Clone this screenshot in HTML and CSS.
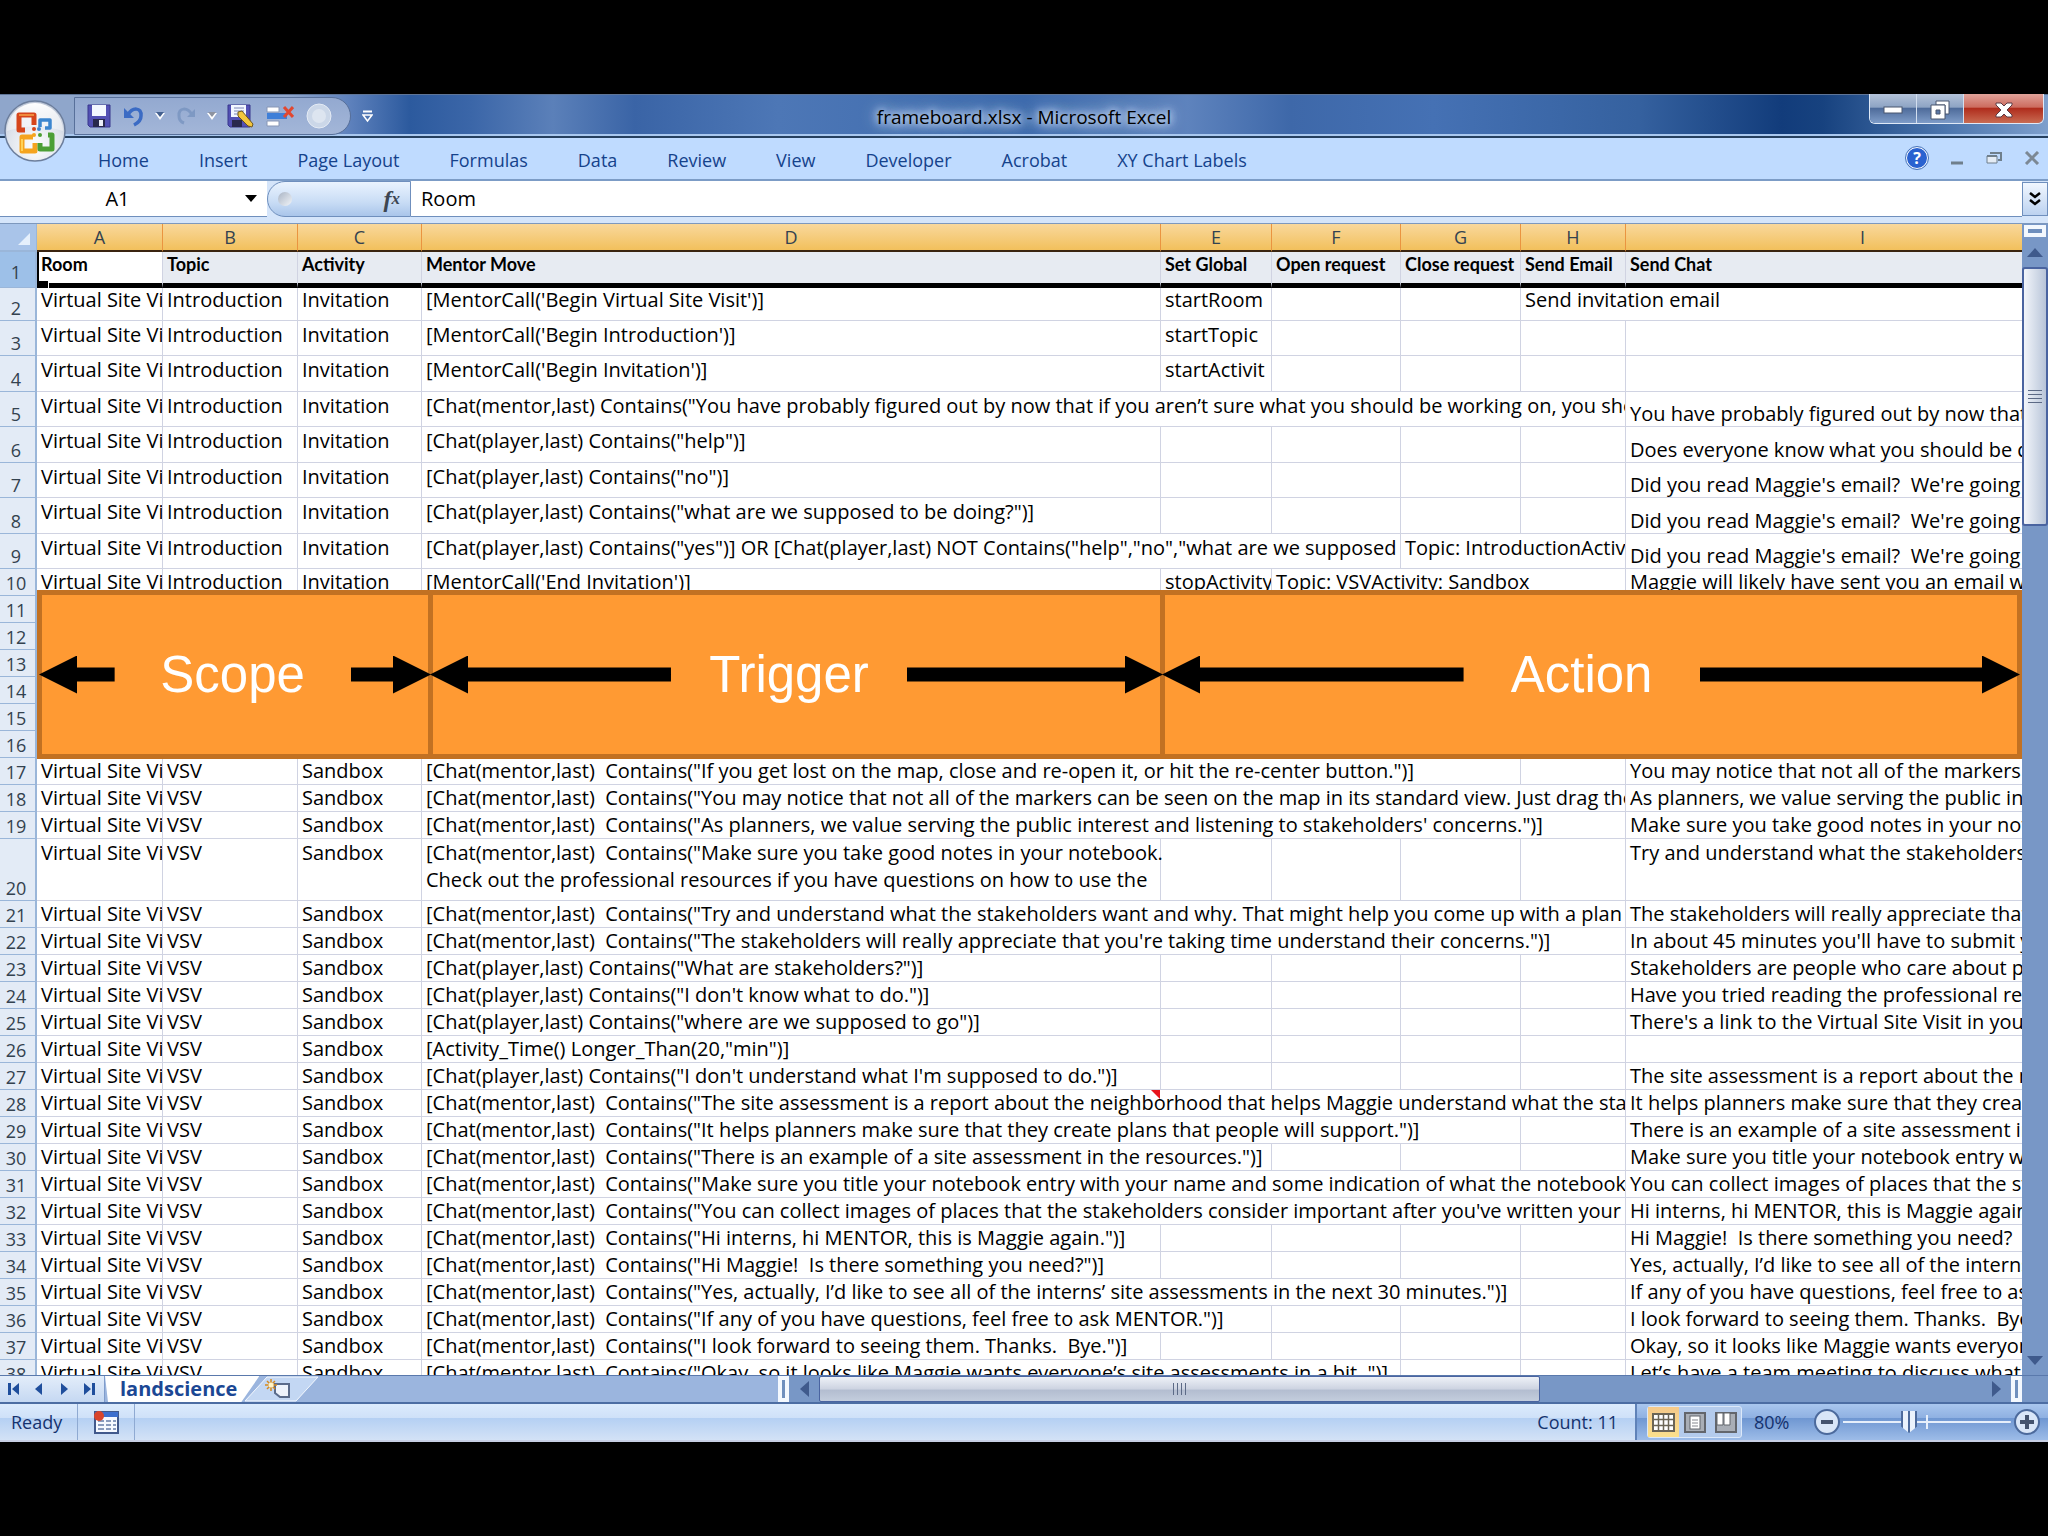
FILE: index.html
```html
<!DOCTYPE html>
<html lang="en">
<head>
  <meta charset="UTF-8" />
  <meta name="viewport" content="width=device-width, initial-scale=1.0"/>
  <title>frameboard.xlsx - Microsoft Excel</title>
  <link rel="stylesheet" href="styles.css">
</head>
<body>

<div class="window">

  <header class="titlebar">
    <div class="quick-access">
      <button class="office" aria-label="Office Button">
        <svg width="62" height="62" viewBox="0 0 62 62">
          <defs>
            <radialGradient id="orb" cx="50%" cy="75%" r="75%">
              <stop offset="0" stop-color="#ffffff"/>
              <stop offset="0.6" stop-color="#dfe4ec"/>
              <stop offset="1" stop-color="#b9c3d4"/>
            </radialGradient>
            <linearGradient id="orbTop" x1="0" y1="0" x2="0" y2="1">
              <stop offset="0" stop-color="#fff"/>
              <stop offset="1" stop-color="#fff" stop-opacity="0.35"/>
            </linearGradient>
          </defs>
          <circle cx="31" cy="31" r="30" fill="url(#orb)" stroke="#6c7e9c" stroke-width="1.5"/>
          <path d="M3 31A28 28 0 0 1 59 31Q31 22 3 31Z" fill="url(#orbTop)"/>
          <g fill="none" stroke-width="5" stroke-linejoin="round">
            <path d="M21 30H15V15H30V25" stroke="#d6451b"/>
            <path d="M36 27V20H46V28H41" stroke="#3c86cf" stroke-width="3.5"/>
            <path d="M29 37H18V51H31V43" stroke="#f5a41f"/>
            <path d="M44 35H48V49H36V43" stroke="#4c9f35"/>
          </g>
          <path d="M15 15H30" stroke="#f08a3c" stroke-width="2"/>
          <path d="M18 39V51" stroke="#ffd257" stroke-width="2"/>
          <circle cx="30" cy="29" r="2" fill="#d6451b"/>
          <circle cx="35" cy="29" r="2" fill="#3c86cf"/>
          <circle cx="30" cy="35" r="2" fill="#f5a41f"/>
          <circle cx="36" cy="35" r="2" fill="#4c9f35"/>
        </svg>
      </button>
      <div class="pill">
        <button aria-label="Save">
          <svg width="24" height="24" viewBox="0 0 24 24">
            <path d="M1 1H23V23H3L1 21Z" fill="#5250b4" stroke="#38368c"/>
            <rect x="5" y="1" width="14" height="11" fill="#f3f7ff"/>
            <rect x="6" y="15" width="12" height="8" fill="#28284c"/>
            <rect x="12" y="16" width="4" height="6" fill="#eceef8"/>
          </svg>
        </button>
        <button class="undo" aria-label="Undo">
          <svg width="22" height="22" viewBox="0 0 22 22">
            <path d="M5 10C9 2 19 2 18 11C18 15 15 18 11 20" fill="none" stroke="#3b6bc4" stroke-width="3.5"/>
            <path d="M1 3V13H11Z" fill="#3b6bc4"/>
          </svg>
        </button>
        <button class="caret" aria-label="Undo list">
          <svg width="10" height="8" viewBox="0 0 10 8"><path d="M0 1H10L5 8Z" fill="#fff"/><path d="M1 0H9L5 5Z" fill="#43608f"/></svg>
        </button>
        <button class="redo" aria-label="Redo">
          <svg width="22" height="22" viewBox="0 0 22 22">
            <path d="M17 10C13 2 3 2 4 11C4 15 6 17 9 18" fill="none" stroke="#7390bd" stroke-width="3"/>
            <path d="M20 4V12H12Z" fill="#7390bd"/>
          </svg>
        </button>
        <button class="caret" aria-label="Redo list">
          <svg width="10" height="8" viewBox="0 0 10 8"><path d="M0 1H10L5 8Z" fill="#fff"/><path d="M1 0H9L5 5Z" fill="#8d93a0"/></svg>
        </button>
        <button aria-label="Save As">
          <svg width="27" height="24" viewBox="0 0 27 24">
            <path d="M1 1H23V23H3L1 21Z" fill="#5250b4" stroke="#38368c"/>
            <rect x="4" y="1" width="15" height="12" fill="#f3f7ff"/>
            <path d="M7 4H17M7 7H17M7 10H13" stroke="#7c86b8"/>
            <rect x="5" y="16" width="10" height="7" fill="#28284c"/>
            <path d="M11 8L15 7L26 20L25 23L21 22L11 12Z" fill="#f2c63e" stroke="#6e561c"/>
          </svg>
        </button>
        <button aria-label="Delete Sheet Rows">
          <svg width="28" height="24" viewBox="0 0 28 24">
            <path d="M1 3H13V8H1ZM1 17H13V22H1Z" fill="#fff" stroke="#8796b5"/>
            <rect x="1" y="9" width="20" height="6" fill="#3f7fd8"/>
            <path d="M18 3L27 13M27 3L18 13" stroke="#e2472f" stroke-width="3"/>
          </svg>
        </button>
        <button aria-label="Record">
          <svg width="26" height="26" viewBox="0 0 26 26">
            <circle cx="13" cy="13" r="12" fill="#cbd7e8" stroke="#e4ebf5"/>
            <circle cx="13" cy="13" r="7" fill="#dde5f0"/>
          </svg>
        </button>
      </div>
      <button class="customize" aria-label="Customize Quick Access Toolbar">
        <svg width="11" height="13" viewBox="0 0 11 13"><path d="M1 1.500H10" stroke="#fff" stroke-width="2"/><path d="M1 5H10L5.500 11Z" fill="none" stroke="#fff" stroke-width="1.500"/></svg>
      </button>
    </div>
    <h1>frameboard.xlsx - Microsoft Excel</h1>
    <div class="window-buttons">
      <button aria-label="Minimize">
        <svg width="20" height="10" viewBox="0 0 20 10"><rect x="1" y="2" width="18" height="6" fill="#fff" stroke="#4a566e"/></svg>
      </button>
      <button aria-label="Restore">
        <svg width="20" height="20" viewBox="0 0 20 20">
          <path d="M6 1H19V14H15V5H6Z" fill="#fff" stroke="#4a566e"/>
          <path d="M1 5H15V19H1ZM6 10V14H10V10Z" fill="#fff" fill-rule="evenodd" stroke="#4a566e"/>
        </svg>
      </button>
      <button class="close" aria-label="Close">
        <svg width="18" height="16" viewBox="0 0 18 16"><path d="M1 1H6L9 4L12 1H17V3L12 8L17 13V15H12L9 12L6 15H1V13L6 8L1 3Z" fill="#fff" stroke="#5a3a44"/></svg>
      </button>
    </div>
  </header>

  <nav class="ribbon">
    <a href="#">Home</a>
    <a href="#">Insert</a>
    <a href="#">Page Layout</a>
    <a href="#">Formulas</a>
    <a href="#">Data</a>
    <a href="#">Review</a>
    <a href="#">View</a>
    <a href="#">Developer</a>
    <a href="#">Acrobat</a>
    <a href="#">XY Chart Labels</a>
    <div class="doc-buttons">
      <button class="help" aria-label="Help">?</button>
      <button aria-label="Minimize workbook">
        <svg width="14" height="16" viewBox="0 0 14 16"><path d="M1 13H13" stroke="#6f7f8c" stroke-width="3"/></svg>
      </button>
      <button aria-label="Restore workbook">
        <svg width="16" height="14" viewBox="0 0 16 14"><path d="M4 2H15V9H12" fill="none" stroke="#6f7f8c" stroke-width="2"/><path d="M1 5H11V12H1Z" fill="#e4ecf5" stroke="#6f7f8c"/><path d="M1 5H11" stroke="#6f7f8c" stroke-width="2"/></svg>
      </button>
      <button aria-label="Close workbook">
        <svg width="16" height="14" viewBox="0 0 16 14"><path d="M2 1L14 13M14 1L2 13" stroke="#7c8894" stroke-width="3"/></svg>
      </button>
    </div>
  </nav>

  <div class="formula-bar">
    <input class="name-box" aria-label="Name Box" value="A1">
    <button class="name-caret" aria-label="Open name list">
      <svg width="12" height="8" viewBox="0 0 12 8"><path d="M0 0H12L6 7Z" fill="#000"/></svg>
    </button>
    <div class="fx">
      <span class="dot"></span>
      <button aria-label="Insert Function"><i>f</i><sub>x</sub></button>
    </div>
    <input class="formula" aria-label="Formula" value="Room">
    <button class="expand" aria-label="Expand formula bar">
      <svg width="12" height="14" viewBox="0 0 12 14"><path d="M1 1L6 5L11 1M1 8L6 12L11 8" fill="none" stroke="#000" stroke-width="2.500"/></svg>
    </button>
  </div>

  <main class="workspace">
    <div class="sheet">
      <table>
        <colgroup>
          <col class="col-num"><col class="col-a"><col class="col-b"><col class="col-c"><col class="col-d">
          <col class="col-e"><col class="col-f"><col class="col-g"><col class="col-h"><col class="col-i">
        </colgroup>
        <thead>
          <tr><th class="corner" aria-label="Select all"><svg width="12" height="12" viewBox="0 0 12 12"><path d="M12 0V12H0Z" fill="#e6f0fc"/></svg></th><th>A</th><th>B</th><th>C</th><th>D</th><th>E</th><th>F</th><th>G</th><th>H</th><th>I</th></tr>
        </thead>
        <tbody>
          <tr class="head"><th>1</th><td class="active">Room<span class="handle"></span></td><td>Topic</td><td>Activity</td><td>Mentor Move</td><td>Set Global</td><td>Open request</td><td>Close request</td><td>Send Email</td><td>Send Chat</td></tr>
          <tr class="first"><th>2</th><td>Virtual Site Visit</td><td>Introduction</td><td>Invitation</td><td>[MentorCall('Begin Virtual Site Visit')]</td><td>startRoom</td><td></td><td></td><td colspan="2">Send invitation email</td></tr>
          <tr class="tall"><th>3</th><td>Virtual Site Visit</td><td>Introduction</td><td>Invitation</td><td>[MentorCall('Begin Introduction')]</td><td>startTopic</td><td></td><td></td><td></td><td></td></tr>
          <tr class="tall"><th>4</th><td>Virtual Site Visit</td><td>Introduction</td><td>Invitation</td><td>[MentorCall('Begin Invitation')]</td><td>startActivit</td><td></td><td></td><td></td><td></td></tr>
          <tr class="tall"><th>5</th><td>Virtual Site Visit</td><td>Introduction</td><td>Invitation</td><td colspan="5">[Chat(mentor,last) Contains("You have probably figured out by now that if you aren’t sure what you should be working on, you should</td><td class="low">You have probably figured out by now that</td></tr>
          <tr class="tall"><th>6</th><td>Virtual Site Visit</td><td>Introduction</td><td>Invitation</td><td>[Chat(player,last) Contains("help")]</td><td></td><td></td><td></td><td></td><td class="low">Does everyone know what you should be doing?</td></tr>
          <tr class="tall"><th>7</th><td>Virtual Site Visit</td><td>Introduction</td><td>Invitation</td><td>[Chat(player,last) Contains("no")]</td><td></td><td></td><td></td><td></td><td class="low">Did you read Maggie's email?  We're going</td></tr>
          <tr class="tall"><th>8</th><td>Virtual Site Visit</td><td>Introduction</td><td>Invitation</td><td>[Chat(player,last) Contains("what are we supposed to be doing?")]</td><td></td><td></td><td></td><td></td><td class="low">Did you read Maggie's email?  We're going</td></tr>
          <tr class="tall"><th>9</th><td>Virtual Site Visit</td><td>Introduction</td><td>Invitation</td><td colspan="3">[Chat(player,last) Contains("yes")] OR [Chat(player,last) NOT Contains("help","no","what are we supposed</td><td colspan="2">Topic: IntroductionActivity</td><td class="low">Did you read Maggie's email?  We're going</td></tr>
          <tr><th>10</th><td>Virtual Site Visit</td><td>Introduction</td><td>Invitation</td><td>[MentorCall('End Invitation')]</td><td>stopActivity</td><td colspan="3">Topic: VSVActivity: Sandbox</td><td>Maggie will likely have sent you an email with</td></tr>
          <tr><th>11</th><td colspan="9"></td></tr>
          <tr><th>12</th><td colspan="9"></td></tr>
          <tr><th>13</th><td colspan="9"></td></tr>
          <tr><th>14</th><td colspan="9"></td></tr>
          <tr><th>15</th><td colspan="9"></td></tr>
          <tr><th>16</th><td colspan="9"></td></tr>
          <tr><th>17</th><td>Virtual Site Visit</td><td>VSV</td><td>Sandbox</td><td colspan="4">[Chat(mentor,last)  Contains("If you get lost on the map, close and re-open it, or hit the re-center button.")]</td><td></td><td>You may notice that not all of the markers can</td></tr>
          <tr><th>18</th><td>Virtual Site Visit</td><td>VSV</td><td>Sandbox</td><td colspan="5">[Chat(mentor,last)  Contains("You may notice that not all of the markers can be seen on the map in its standard view. Just drag the</td><td>As planners, we value serving the public interest</td></tr>
          <tr><th>19</th><td>Virtual Site Visit</td><td>VSV</td><td>Sandbox</td><td colspan="5">[Chat(mentor,last)  Contains("As planners, we value serving the public interest and listening to stakeholders' concerns.")]</td><td>Make sure you take good notes in your notebook.</td></tr>
          <tr class="double"><th>20</th><td>Virtual Site Visit</td><td>VSV</td><td>Sandbox</td><td class="spill">[Chat(mentor,last)  Contains("Make sure you take good notes in your notebook.<br>Check out the professional resources if you have questions on how to use the</td><td></td><td></td><td></td><td></td><td>Try and understand what the stakeholders</td></tr>
          <tr><th>21</th><td>Virtual Site Visit</td><td>VSV</td><td>Sandbox</td><td colspan="5">[Chat(mentor,last)  Contains("Try and understand what the stakeholders want and why. That might help you come up with a plan that</td><td>The stakeholders will really appreciate that you're</td></tr>
          <tr><th>22</th><td>Virtual Site Visit</td><td>VSV</td><td>Sandbox</td><td colspan="5">[Chat(mentor,last)  Contains("The stakeholders will really appreciate that you're taking time understand their concerns.")]</td><td>In about 45 minutes you'll have to submit your</td></tr>
          <tr><th>23</th><td>Virtual Site Visit</td><td>VSV</td><td>Sandbox</td><td>[Chat(player,last) Contains("What are stakeholders?")]</td><td></td><td></td><td></td><td></td><td>Stakeholders are people who care about places</td></tr>
          <tr><th>24</th><td>Virtual Site Visit</td><td>VSV</td><td>Sandbox</td><td>[Chat(player,last) Contains("I don't know what to do.")]</td><td></td><td></td><td></td><td></td><td>Have you tried reading the professional resources</td></tr>
          <tr><th>25</th><td>Virtual Site Visit</td><td>VSV</td><td>Sandbox</td><td>[Chat(player,last) Contains("where are we supposed to go")]</td><td></td><td></td><td></td><td></td><td>There's a link to the Virtual Site Visit in your</td></tr>
          <tr><th>26</th><td>Virtual Site Visit</td><td>VSV</td><td>Sandbox</td><td>[Activity_Time() Longer_Than(20,"min")]</td><td></td><td></td><td></td><td></td><td></td></tr>
          <tr><th>27</th><td>Virtual Site Visit</td><td>VSV</td><td>Sandbox</td><td>[Chat(player,last) Contains("I don't understand what I'm supposed to do.")]</td><td></td><td></td><td></td><td></td><td>The site assessment is a report about the neighborhood</td></tr>
          <tr><th>28</th><td>Virtual Site Visit</td><td>VSV</td><td>Sandbox</td><td class="noted" colspan="5">[Chat(mentor,last)  Contains("The site assessment is a report about the neighborhood that helps Maggie understand what the stakeholders<span class="note"></span></td><td>It helps planners make sure that they create plans</td></tr>
          <tr><th>29</th><td>Virtual Site Visit</td><td>VSV</td><td>Sandbox</td><td colspan="4">[Chat(mentor,last)  Contains("It helps planners make sure that they create plans that people will support.")]</td><td></td><td>There is an example of a site assessment in the</td></tr>
          <tr><th>30</th><td>Virtual Site Visit</td><td>VSV</td><td>Sandbox</td><td colspan="2">[Chat(mentor,last)  Contains("There is an example of a site assessment in the resources.")]</td><td></td><td></td><td></td><td>Make sure you title your notebook entry with</td></tr>
          <tr><th>31</th><td>Virtual Site Visit</td><td>VSV</td><td>Sandbox</td><td colspan="5">[Chat(mentor,last)  Contains("Make sure you title your notebook entry with your name and some indication of what the notebook entry</td><td>You can collect images of places that the stakeholders</td></tr>
          <tr><th>32</th><td>Virtual Site Visit</td><td>VSV</td><td>Sandbox</td><td colspan="5">[Chat(mentor,last)  Contains("You can collect images of places that the stakeholders consider important after you've written your site</td><td>Hi interns, hi MENTOR, this is Maggie again.</td></tr>
          <tr><th>33</th><td>Virtual Site Visit</td><td>VSV</td><td>Sandbox</td><td>[Chat(mentor,last)  Contains("Hi interns, hi MENTOR, this is Maggie again.")]</td><td></td><td></td><td></td><td></td><td>Hi Maggie!  Is there something you need?</td></tr>
          <tr><th>34</th><td>Virtual Site Visit</td><td>VSV</td><td>Sandbox</td><td>[Chat(mentor,last)  Contains("Hi Maggie!  Is there something you need?")]</td><td></td><td></td><td></td><td></td><td>Yes, actually, I’d like to see all of the interns’</td></tr>
          <tr><th>35</th><td>Virtual Site Visit</td><td>VSV</td><td>Sandbox</td><td colspan="4">[Chat(mentor,last)  Contains("Yes, actually, I’d like to see all of the interns’ site assessments in the next 30 minutes.")]</td><td></td><td>If any of you have questions, feel free to ask</td></tr>
          <tr><th>36</th><td>Virtual Site Visit</td><td>VSV</td><td>Sandbox</td><td colspan="2">[Chat(mentor,last)  Contains("If any of you have questions, feel free to ask MENTOR.")]</td><td></td><td></td><td></td><td>I look forward to seeing them. Thanks.  Bye.</td></tr>
          <tr><th>37</th><td>Virtual Site Visit</td><td>VSV</td><td>Sandbox</td><td>[Chat(mentor,last)  Contains("I look forward to seeing them. Thanks.  Bye.")]</td><td></td><td></td><td></td><td></td><td>Okay, so it looks like Maggie wants everyone’s</td></tr>
          <tr><th>38</th><td>Virtual Site Visit</td><td>VSV</td><td>Sandbox</td><td colspan="3">[Chat(mentor,last)  Contains("Okay, so it looks like Maggie wants everyone’s site assessments in a bit. ")]</td><td></td><td></td><td>Let’s have a team meeting to discuss what</td></tr>
        </tbody>
      </table>

      <div class="bands">
        <div class="band scope"><span class="arrow left"></span><span class="label">Scope</span><span class="arrow right"></span></div>
        <div class="band trigger"><span class="arrow left"></span><span class="label">Trigger</span><span class="arrow right"></span></div>
        <div class="band action"><span class="arrow left"></span><span class="label">Action</span><span class="arrow right"></span></div>
      </div>
    </div>

    <div class="vscroll">
      <span class="split"></span>
      <button aria-label="Scroll up"><svg width="16" height="9" viewBox="0 0 16 9"><path d="M0 9L8 0L16 9Z" fill="#3f5a8c"/></svg></button>
      <div class="vtrack"><div class="vthumb"><span class="grip"></span></div></div>
      <button aria-label="Scroll down"><svg width="16" height="9" viewBox="0 0 16 9"><path d="M0 0H16L8 9Z" fill="#3f5a8c"/></svg></button>
    </div>
  </main>

  <div class="sheet-bar">
    <div class="tabs">
      <div class="tab-nav">
        <button aria-label="First sheet"><svg width="12" height="14" viewBox="0 0 12 14"><path d="M0 1H3V13H0ZM11 1V13L4 7Z" fill="#1f4e9c"/></svg></button>
        <button aria-label="Previous sheet"><svg width="12" height="14" viewBox="0 0 12 14"><path d="M9 1V13L2 7Z" fill="#1f4e9c"/></svg></button>
        <button aria-label="Next sheet"><svg width="12" height="14" viewBox="0 0 12 14"><path d="M3 1V13L10 7Z" fill="#1f4e9c"/></svg></button>
        <button aria-label="Last sheet"><svg width="12" height="14" viewBox="0 0 12 14"><path d="M9 1H12V13H9ZM1 1V13L8 7Z" fill="#1f4e9c"/></svg></button>
      </div>
      <button class="tab">landscience</button>
      <button class="new-tab" aria-label="Insert Worksheet">
        <svg width="74" height="26" viewBox="0 0 74 26">
          <path d="M0 25L22 1H73L51 25Z" fill="#c3d7f3" stroke="#f4f8fe"/>
          <path d="M30 8H44V21H35L30 17Z" fill="#eef3fb" stroke="#5a6b8a" stroke-width="2"/>
          <path d="M26 3V15M20 9H32M22 5L30 13M30 5L22 13" stroke="#d68a1e" stroke-width="1.500"/>
          <circle cx="26" cy="9" r="2.500" fill="#fff3c4"/>
        </svg>
      </button>
    </div>
    <div class="hscroll">
      <span class="bar-handle"></span>
      <button aria-label="Scroll left"><svg width="9" height="16" viewBox="0 0 9 16"><path d="M9 0V16L0 8Z" fill="#3f5a8c"/></svg></button>
      <div class="htrack"><div class="hthumb"><span class="grip"></span></div></div>
      <button aria-label="Scroll right"><svg width="9" height="16" viewBox="0 0 9 16"><path d="M0 0V16L9 8Z" fill="#3f5a8c"/></svg></button>
      <span class="bar-handle"></span>
    </div>
  </div>

  <footer class="status">
    <span class="ready">Ready</span>
    <button class="macro" aria-label="Record Macro">
      <svg width="26" height="24" viewBox="0 0 26 24">
        <rect x="2" y="2" width="23" height="21" fill="#f6f9ff" stroke="#41598c" stroke-width="2"/>
        <rect x="2" y="2" width="23" height="5" fill="#3c6fce"/>
        <path d="M5 11H11M13 11H18M20 11H23M5 15H11M13 15H18M20 15H23M5 19H11M13 19H18M20 19H23" stroke="#8a9cbe" stroke-width="2"/>
        <circle cx="6" cy="6" r="5" fill="#d8452c"/>
      </svg>
    </button>
    <span class="count">Count: 11</span>
    <div class="status-right">
      <div class="views">
        <button class="on" aria-label="Normal view">
          <svg width="23" height="19" viewBox="0 0 23 19"><rect x="1" y="1" width="21" height="17" fill="#fff" stroke="#6b6556" stroke-width="2"/><path d="M6.500 1V18M11.500 1V18M16.500 1V18M1 6.500H22M1 12.500H22" stroke="#6b6556" stroke-width="1.500"/></svg>
        </button>
        <button aria-label="Page layout view">
          <svg width="22" height="21" viewBox="0 0 22 21"><rect x="1" y="1" width="20" height="19" fill="#a9aeb6" stroke="#63666c" stroke-width="2"/><rect x="6" y="4" width="10" height="13" fill="#fff" stroke="#63666c"/><path d="M8 8H14M8 11H14M8 14H14" stroke="#85888e"/></svg>
        </button>
        <button aria-label="Page break preview">
          <svg width="22" height="21" viewBox="0 0 22 21"><rect x="1" y="1" width="20" height="19" fill="#a9aeb6" stroke="#63666c" stroke-width="2"/><path d="M2 1H8V13H2ZM9 1H15V13H9Z" fill="#fff" stroke="#63666c"/></svg>
        </button>
      </div>
      <span class="percent">80%</span>
      <button class="round" aria-label="Zoom out"><svg width="28" height="28" viewBox="0 0 28 28"><circle cx="14" cy="14" r="12" fill="#d9e6f8" stroke="#4c6a9c" stroke-width="2"/><path d="M8 14H20" stroke="#44536e" stroke-width="4"/></svg></button>
      <input class="zoom" type="range" min="0" max="100" value="38" aria-label="Zoom">
      <button class="round" aria-label="Zoom in"><svg width="28" height="28" viewBox="0 0 28 28"><circle cx="14" cy="14" r="12" fill="#d9e6f8" stroke="#4c6a9c" stroke-width="2"/><path d="M7 14H21M14 7V21" stroke="#44536e" stroke-width="4"/></svg></button>
    </div>
  </footer>

</div>

</body>
</html>
```
FILE: styles.css
```css
* {
  box-sizing: border-box;
}
body {
  margin: 0;
  height: 100vh;
  padding: 94px 0;
  background: #000;
  color: #000;
  font-family: "Open Sans", "Segoe UI", sans-serif;
  font-size: 18px;
}
button {
  display: flex;
  align-items: center;
  justify-content: center;
  padding: 0;
  border: 0;
  background: none;
  font: inherit;
  color: inherit;
}
svg {
  display: block;
}
.window {
  height: 100%;
  display: flex;
  flex-direction: column;
}

/* title bar */
.titlebar {
  position: relative;
  z-index: 1;
  flex: 0 0 44px;
  min-height: 0;
  display: grid;
  grid-template-columns: 1fr auto 1fr;
  grid-template-rows: 42px;
  border-bottom: 2px solid #26405f;
  box-shadow: inset 0 -2px 0 #a9c8ef, inset 0 1px 0 #5f7597;
  background: linear-gradient(90deg, #8fa6cb 0, #8fa6cb 14%, #5f82bd 17%, #2c5a9e 20%, #3b66a8 23%, #5b80b9 27%, #3a64a6 31%, #4d77b6 38%, #3d6aad 50%, #5e83bd 58%, #3e68a9 63%, #4571b4 70%, #35619f 80%, #123c7b 87%, #17427f 89%, #4b75ad 95%, #7e9fcc 100%);
}
.titlebar h1 {
  margin: 0;
  font-size: 19px;
  font-weight: 400;
  line-height: 46px;
  text-shadow: 0 0 6px #c5d8f2, 0 0 10px #c5d8f2, 0 0 14px #c5d8f2, 0 0 18px #c5d8f2;
}
.quick-access {
  display: flex;
  align-items: flex-start;
}
.office {
  width: 62px;
  margin: 6px 0 0 4px;
}
.pill {
  display: flex;
  align-items: center;
  gap: 12px;
  height: 38px;
  margin: 3px 0 0 8px;
  padding: 0 18px 0 12px;
  border: 1px solid #58709a;
  border-radius: 0 20px 20px 0;
  background: linear-gradient(#93a9d0, #a3b6d8);
}
.pill .caret {
  margin: 0 -2px;
}
.pill .redo {
  opacity: 0.7;
}
.customize {
  margin: 16px 0 0 11px;
}
.window-buttons {
  justify-self: end;
  display: flex;
  height: 30px;
  margin-right: 4px;
  border: 1px solid #dfe9f7;
  border-top: 0;
  border-radius: 0 0 6px 6px;
  overflow: hidden;
}
.window-buttons button {
  width: 47px;
  padding-top: 2px;
  border-right: 1px solid #d2deef;
  background: linear-gradient(#b4c3d9 0, #8ea4c4 45%, #4f6c9b 50%, #7e9cc8 100%);
}
.window-buttons .close {
  width: 79px;
  border: 0;
  background: linear-gradient(#e0a29a 0, #cd6c5f 45%, #b02d1d 50%, #c96b52 100%);
}

/* ribbon tabs */
.ribbon {
  flex: 0 0 43px;
  display: flex;
  gap: 50px;
  padding: 3px 8px 0 98px;
  border-bottom: 2px solid #7c9cc6;
  background: #bfdbff;
}
.ribbon a {
  color: #15428b;
  line-height: 38px;
  font-size: 18px;
  text-decoration: none;
}
.doc-buttons {
  display: flex;
  align-items: center;
  gap: 22px;
  margin: 0 0 4px auto;
}
.help {
  width: 22px;
  height: 22px;
  border: 1px solid #fff;
  border-radius: 50%;
  outline: 1px solid #4a74b8;
  background: #2a62d0;
  color: #fff;
  font-size: 16px;
  font-weight: 700;
  line-height: 16px;
}

/* formula bar */
.formula-bar {
  flex: 0 0 43px;
  display: flex;
  padding-bottom: 6px;
  border-bottom: 1px solid #7d98bd;
  background: #d5e5fa;
  font-size: 20px;
}
.formula-bar input {
  min-width: 0;
  height: 36px;
  padding: 0;
  border: 0;
  border-bottom: 1px solid #6f8fbd;
  outline: 0;
  background: #fff;
  font: inherit;
}
.name-box {
  width: 235px;
  text-align: center;
}
.name-caret {
  width: 32px;
  border-bottom: 1px solid #6f8fbd;
  background: #fff;
}
.fx {
  width: 144px;
  height: 36px;
  display: flex;
  align-items: center;
  justify-content: space-between;
  padding: 0 10px;
  border: 1px solid #6f8fbd;
  border-radius: 18px 0 0 18px;
  background: linear-gradient(#eaf3fe, #c8dcf5 60%, #a9c5ea);
}
.dot {
  width: 14px;
  height: 14px;
  border-radius: 50%;
  background: linear-gradient(135deg, #a9b4c4, #f2f5f9);
}
.fx button {
  color: #3d4652;
  font: bold 24px "Liberation Serif", serif;
}
.fx sub {
  font-size: 17px;
  font-style: italic;
}
.formula-bar .formula {
  flex: 1;
  padding-left: 10px;
}
.expand {
  width: 26px;
  height: 34px;
  margin-top: 1px;
  border: 1px solid #6f8fbd;
  background: linear-gradient(#f1f7ff, #bcd2f0);
}

/* worksheet grid */
.workspace {
  flex: 1;
  min-height: 0;
  display: flex;
}
.sheet {
  position: relative;
  flex: 1;
  min-width: 0;
  overflow: hidden;
  background: #fff;
  font-family: "Open Sans", Calibri, sans-serif;
  font-size: 20px;
}
table {
  width: 100%;
  table-layout: fixed;
  border-collapse: separate;
  border-spacing: 0;
}
.col-num { width: 37px; }
.col-a { width: 126px; }
.col-b { width: 135px; }
.col-c { width: 124px; }
.col-d { width: 739px; }
.col-e { width: 111px; }
.col-f { width: 129px; }
.col-g { width: 120px; }
.col-h { width: 105px; }
.col-i { width: 474px; }
th,
td {
  height: 27px;
  padding: 0;
  line-height: 24px;
  overflow: hidden;
  white-space: pre;
}
th {
  font-size: 18px;
}
td {
  padding: 1px 0 0 4px;
  border-right: 1px solid #d0d3e2;
  border-bottom: 1px solid #d0d3e2;
  text-align: left;
  vertical-align: top;
}
tbody th {
  padding-right: 3px;
  border-right: 2px solid #9ab6d9;
  border-bottom: 1px solid #9ab6d9;
  background: #e3ebf6;
  color: #33424f;
  font-weight: 400;
  vertical-align: bottom;
}
thead th {
  height: 28px;
  border-right: 1px solid #ea9440;
  border-bottom: 2px solid #3a2410;
  background: linear-gradient(#f9d89c, #f2c05c);
  color: #33424f;
  font-weight: 400;
}
thead .corner {
  border-color: #9ab6d9;
  background: #a9c4e9;
}
.corner svg {
  margin: 4px 0 0 18px;
}
.head td {
  height: 36px;
  padding-top: 0;
  border-bottom: 5px solid #000;
  background: #e7ebf2;
  font-family: Lato, Calibri, sans-serif;
  font-size: 18px;
  font-weight: 700;
}
.head th {
  padding-bottom: 3px;
  background: #9dc0e8;
}
.head .active {
  position: relative;
  border-left: 2px solid #000;
  padding-left: 2px;
  background: #fff;
  overflow: visible;
}
.handle {
  position: absolute;
  left: 0;
  bottom: -6px;
  width: 10px;
  height: 9px;
  border: 1px solid #fff;
  border-left: 0;
  background: #000;
}
.first td {
  height: 33px;
  padding-top: 0;
}
.tall td {
  height: 35px;
  padding-top: 2px;
}
.tall:nth-child(even) td {
  height: 36px;
}
.tall .low {
  vertical-align: bottom;
}
.double td {
  height: 62px;
  padding-top: 0;
  line-height: 27px;
}
.double .spill {
  overflow: visible;
}
.noted {
  position: relative;
}
.note {
  position: absolute;
  top: 0;
  left: 729px;
  border-top: 9px solid #e8141c;
  border-left: 9px solid transparent;
}

/* orange bands over the grid */
.bands {
  position: absolute;
  top: 366px;
  left: 37px;
  right: 0;
  height: 169px;
  display: flex;
}
.band {
  display: flex;
  align-items: center;
  border: 5px solid #c27122;
  background: #ff9a33;
}
.band + .band {
  margin-left: -5px;
}
.scope {
  width: 396px;
}
.trigger {
  width: 737px;
}
.action {
  flex: 1;
}
.label {
  flex: 0 0 236px;
  color: #fff;
  font-family: "Liberation Sans", Arial, sans-serif;
  font-size: 51px;
  line-height: 60px;
  text-align: center;
}
.arrow {
  position: relative;
  height: 38px;
  background: #000;
}
.arrow.left {
  flex: 16;
  margin-left: -3px;
  clip-path: polygon(0 50%, 38px 0, 38px 12px, 100% 12px, 100% 26px, 38px 26px, 38px 100%);
}
.arrow.right {
  flex: 17;
  margin-right: -3px;
  clip-path: polygon(100% 50%, calc(100% - 38px) 0, calc(100% - 38px) 12px, 0 12px, 0 26px, calc(100% - 38px) 26px, calc(100% - 38px) 100%);
}

/* scroll bars */
.vscroll {
  flex: 0 0 26px;
  display: flex;
  flex-direction: column;
  background: #7897c6;
}
.vscroll button {
  height: 30px;
}
.split {
  height: 12px;
  margin: 1px 2px 0;
  border: 4px solid #f3f8fe;
  background: #6f8fbd;
}
.vtrack {
  flex: 1;
}
.vthumb {
  height: 24%;
  display: flex;
  align-items: center;
  justify-content: center;
  border: 2px solid #4a64a0;
  border-radius: 3px;
  background: linear-gradient(90deg, #f2f5fa, #cfd8e6 60%, #b8c4d8);
}
.vthumb .grip {
  width: 14px;
  height: 13px;
  background: repeating-linear-gradient(#5c6a86 0 1px, transparent 1px 4px);
}
.sheet-bar {
  flex: 0 0 28px;
  display: flex;
  border-top: 1px solid #5a79ac;
  border-bottom: 2px solid #4c6da3;
  background: #9bb5de;
}
.tabs {
  flex: 0 0 38%;
  display: flex;
}
.tab-nav {
  width: 105px;
  display: flex;
  align-items: center;
  gap: 13px;
  padding-left: 8px;
  border-right: 1px solid #7f9ccb;
  background: linear-gradient(#e3edfa, #c5d8f2);
}
.tab {
  padding: 0 22px 0 15px;
  background: #fff;
  clip-path: polygon(0 0, 100% 0, calc(100% - 18px) 100%, 3px 100%);
  color: #1b4794;
  font-size: 20px;
  font-weight: 700;
  line-height: 24px;
}
.new-tab {
  margin-left: -14px;
}
.hscroll {
  flex: 1;
  display: flex;
  padding-right: 26px;
  background: #7897c6;
}
.hscroll button {
  width: 30px;
}
.bar-handle {
  width: 11px;
  border: 4px solid #f3f8fe;
  background: #6f8fbd;
}
.htrack {
  flex: 1;
}
.hthumb {
  width: 62%;
  height: 100%;
  display: flex;
  align-items: center;
  justify-content: center;
  border: 1px solid #4a64a0;
  border-radius: 2px;
  background: linear-gradient(#eef1f7, #cdd3e1 50%, #b3bdd0 55%, #c3cddd);
}
.hthumb .grip {
  width: 13px;
  height: 12px;
  background: repeating-linear-gradient(90deg, #5c6a86 0 1px, transparent 1px 4px);
}

/* status bar */
.status {
  flex: 0 0 38px;
  display: flex;
  border-bottom: 2px solid #c7cfe4;
  background: linear-gradient(#dcebfd 0, #cfe1f8 38%, #b5d0f3 40%, #d3e2f6 100%);
  color: #15326e;
  font-size: 18px;
  line-height: 36px;
}
.ready {
  width: 78px;
  padding-left: 11px;
  border-right: 1px solid #8faad2;
}
.macro {
  width: 57px;
  border-right: 1px solid #8faad2;
}
.count {
  margin-left: auto;
  padding-right: 17px;
}
.status-right {
  display: flex;
  align-items: center;
  width: 413px;
  padding: 0 7px 0 10px;
  border-left: 2px solid #5f82b8;
  background: linear-gradient(#a9c6ee 0, #8fb1e2 38%, #6f97d2 40%, #9dbce8 100%);
}
.views {
  display: flex;
  height: 32px;
  border: 1px solid #dbe8f9;
  border-radius: 3px;
  background: #b4cbec;
}
.views button {
  width: 31px;
}
.views .on {
  background: linear-gradient(#f5c98a, #fbe08c);
}
.percent {
  margin: 0 24px 0 12px;
}
.zoom {
  flex: 1;
  min-width: 0;
  height: 24px;
  margin: 0 2px;
  appearance: none;
  background:
    linear-gradient(#e6effb, #e6effb) 50% 50% / 2px 14px no-repeat,
    linear-gradient(#e6effb, #e6effb) 50% 50% / 100% 2px no-repeat;
}
.zoom::-webkit-slider-thumb {
  appearance: none;
  width: 16px;
  height: 22px;
  background: linear-gradient(90deg, #4c6a9c 2px, #eaf2fc 2px 7px, #4c6a9c 7px 9px, #eaf2fc 9px 14px, #4c6a9c 14px);
  clip-path: polygon(0 0, 100% 0, 100% 70%, 50% 100%, 0 70%);
}
```
